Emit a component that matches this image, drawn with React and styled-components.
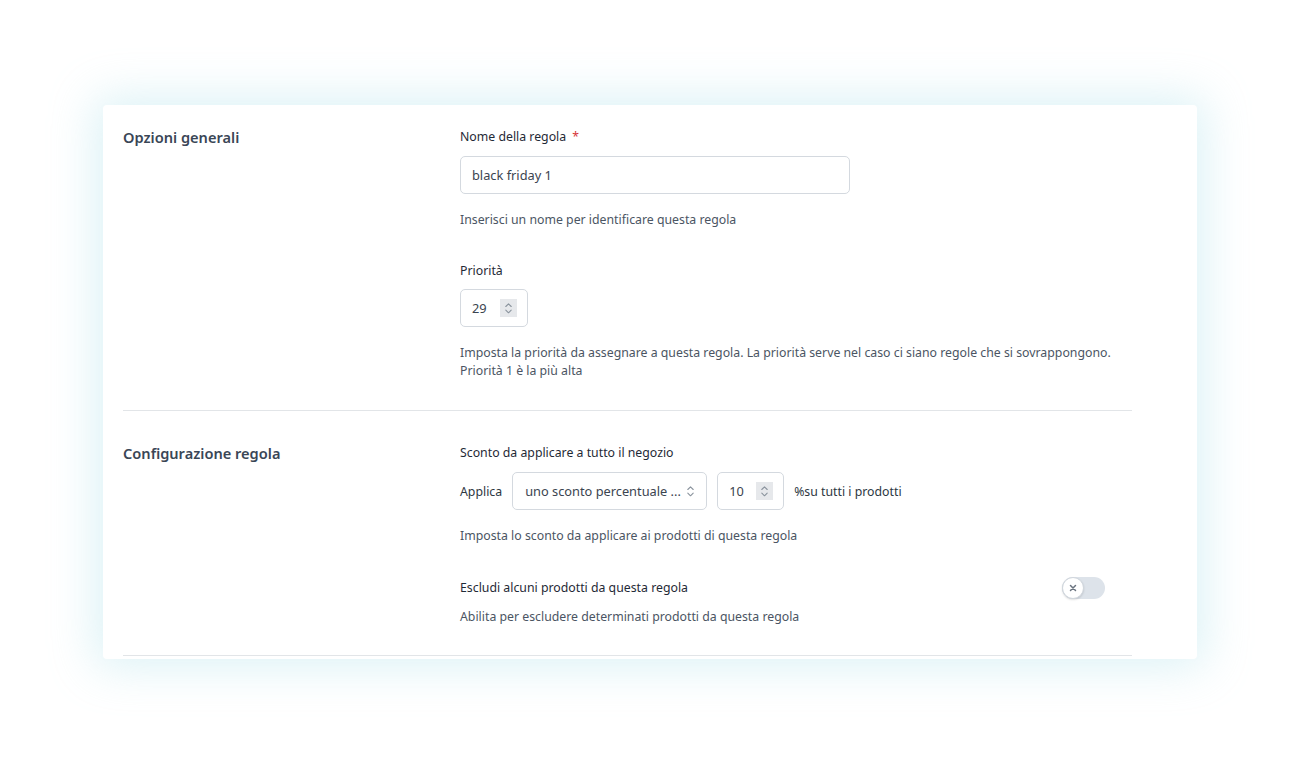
import styled, { createGlobalStyle } from "styled-components";

const GlobalStyle = createGlobalStyle`
  html, body {
    margin: 0;
    background: #ffffff;
    font-family: "Noto Sans", "Open Sans", sans-serif;
  }
`

const Page = styled.div`
  width: 1300px;
  height: 757px;
  padding-top: 105px;
  box-sizing: border-box;
`

const Card = styled.div`
  width: 1094px;
  margin: 0 auto;
  background: #ffffff;
  border-radius: 4px;
  box-shadow: 0 0 45px 8px rgba(172, 224, 234, 0.42);
  padding: 0 65px 3px 20px;
  box-sizing: border-box;
`

const Section = styled.div`
  display: grid;
  grid-template-columns: 337px 1fr;
  padding: ${({ top }) => top}px 0 ${({ bottom }) => bottom}px;
  border-bottom: 1px solid #e2e5e8;
`

const SectionTitle = styled.h2`
  margin: 0;
  font-size: 14.6px;
  line-height: 18px;
  font-weight: 600;
  color: #3a4656;
`

const Fields = styled.div`
  display: flex;
  flex-direction: column;
`

const Label = styled.div`
  font-size: 12.3px;
  line-height: 18px;
  color: #1f2a36;
  margin-top: ${({ gap }) => gap || 0}px;
`

const Required = styled.span`
  color: #d63638;
  margin-left: 6px;
`

const Help = styled.div`
  font-size: 12.3px;
  line-height: 18px;
  color: #4b5563;
  margin-top: ${({ gap }) => gap || 0}px;
`

const TextInput = styled.div`
  margin-top: 10px;
  width: 390px;
  height: 38px;
  box-sizing: border-box;
  border: 1px solid #d4d9df;
  border-radius: 5px;
  display: flex;
  align-items: center;
  padding: 0 11px;
  font-size: 12.8px;
  color: #3b4450;
`

const NumberInput = styled.div`
  margin-top: ${({ gap }) => gap || 0}px;
  width: ${({ w }) => w}px;
  height: 38px;
  box-sizing: border-box;
  border: 1px solid #d4d9df;
  border-radius: 5px;
  display: flex;
  align-items: center;
  justify-content: space-between;
  padding: 0 10px 0 11px;
  font-size: 12.8px;
  color: #3b4450;
`

const Spinner = styled.span`
  width: 17px;
  height: 18px;
  background: #e6e8eb;
  display: flex;
  align-items: center;
  justify-content: center;
`

const Row = styled.div`
  margin-top: 10px;
  display: flex;
  align-items: center;
  gap: 10px;
  font-size: 12.3px;
  color: #2d3742;
`

const Select = styled.div`
  width: 195px;
  height: 38px;
  box-sizing: border-box;
  border: 1px solid #d4d9df;
  border-radius: 5px;
  display: flex;
  align-items: center;
  justify-content: space-between;
  padding: 0 11px 0 12px;
  font-size: 12.8px;
  color: #3b4450;
`

const ToggleRow = styled.div`
  margin-top: 32px;
  display: flex;
  align-items: center;
  justify-content: space-between;
  padding-right: 27px;
`

const Track = styled.span`
  width: 43px;
  height: 22px;
  border-radius: 11px;
  background: #dde3ea;
  display: flex;
  align-items: center;
`

const Knob = styled.span`
  width: 22px;
  height: 22px;
  box-sizing: border-box;
  border-radius: 50%;
  background: #ffffff;
  border: 1px solid #d0d6dd;
  box-shadow: 0 1px 2px rgba(0, 0, 0, 0.12);
  display: flex;
  align-items: center;
  justify-content: center;
`

const Updown = ({ size = 10 }) => (
  <svg width={size} height={size * 1.4} viewBox="0 0 10 14" fill="none" stroke="#8a939d" strokeWidth="1.2" strokeLinecap="round" strokeLinejoin="round">
    <path d="M2 5 5 2l3 3" />
    <path d="M2 9l3 3 3-3" />
  </svg>
)

export default function App() {
  return (
    <Page>
      <GlobalStyle />
      <Card>
        <Section top={23} bottom={30}>
          <SectionTitle>Opzioni generali</SectionTitle>
          <Fields>
            <Label>
              Nome della regola<Required>*</Required>
            </Label>
            <TextInput>black friday 1</TextInput>
            <Help gap={17}>Inserisci un nome per identificare questa regola</Help>
            <Label gap={33}>Priorità</Label>
            <NumberInput w={68} gap={9}>
              29
              <Spinner>
                <Updown size={9} />
              </Spinner>
            </NumberInput>
            <Help gap={17}>
              Imposta la priorità da assegnare a questa regola. La priorità serve nel caso ci siano regole che si sovrappongono.
              <br />
              Priorità 1 è la più alta
            </Help>
          </Fields>
        </Section>
        <Section top={33} bottom={29}>
          <SectionTitle>Configurazione regola</SectionTitle>
          <Fields>
            <Label>Sconto da applicare a tutto il negozio</Label>
            <Row>
              <span>Applica</span>
              <Select>
                uno sconto percentuale ...
                <Updown size={9} />
              </Select>
              <NumberInput w={67}>
                10
                <Spinner>
                  <Updown size={9} />
                </Spinner>
              </NumberInput>
              <span>%su tutti i prodotti</span>
            </Row>
            <Help gap={17}>Imposta lo sconto da applicare ai prodotti di questa regola</Help>
            <ToggleRow>
              <Label>Escludi alcuni prodotti da questa regola</Label>
              <Track>
                <Knob>
                  <svg width="8" height="8" viewBox="0 0 8 8" stroke="#6b7480" strokeWidth="1.5" strokeLinecap="round">
                    <path d="M1.5 1.5l5 5M6.5 1.5l-5 5" />
                  </svg>
                </Knob>
              </Track>
            </ToggleRow>
            <Help gap={9}>Abilita per escludere determinati prodotti da questa regola</Help>
          </Fields>
        </Section>
      </Card>
    </Page>
  )
}
